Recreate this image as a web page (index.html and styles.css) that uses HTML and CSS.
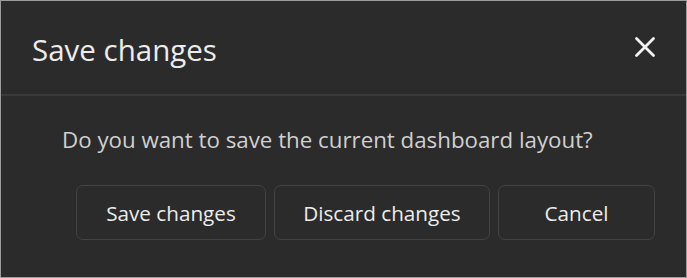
FILE: index.html
```html
<!DOCTYPE html>
<html>
<head>
<meta charset="utf-8">
<link rel="stylesheet" href="styles.css">
</head>
<body>
<div class="dialog">
  <div class="header">
    <h1 class="title">Save changes</h1>
    <button class="close" aria-label="Close">
      <svg width="22" height="22" viewBox="0 0 22 22"><path d="M2.5 2.5 L19.5 19.5 M19.5 2.5 L2.5 19.5" stroke="#f2f2f2" stroke-width="2.8" stroke-linecap="round"/></svg>
    </button>
  </div>
  <div class="content">
    <p class="message">Do you want to save the current dashboard layout?</p>
    <div class="actions">
      <button class="btn btn-save">Save changes</button>
      <button class="btn btn-discard">Discard changes</button>
      <button class="btn btn-cancel">Cancel</button>
    </div>
  </div>
</div>
</body>
</html>
```
FILE: styles.css
```css
html, body {
  margin: 0;
  padding: 0;
  background: #2b2b2b;
}
.dialog {
  width: 687px;
  height: 278px;
  box-sizing: border-box;
  border: 1px solid #9c9c9c;
  background: #2b2b2b;
  font-family: "Open Sans", "Noto Sans", sans-serif;
  color: #e6e6e6;
  display: flex;
  flex-direction: column;
}
.header {
  height: 95px;
  box-sizing: border-box;
  border-bottom: 2px solid #3a3a3a;
  padding: 4px 30px 0 31px;
  display: flex;
  align-items: center;
  justify-content: space-between;
}
.title {
  margin: 0;
  font-weight: 400;
  font-size: 29.5px;
  line-height: 38px;
  color: #ececec;
}
.close {
  background: none;
  border: none;
  padding: 0;
  width: 22px;
  height: 22px;
  display: flex;
  margin-top: -6px;
}
.content {
  padding: 29px 31px 0 61px;
  display: flex;
  flex-direction: column;
}
.message {
  margin: 0;
  font-size: 22.3px;
  line-height: 30px;
  color: #d0d0d0;
}
.actions {
  margin-top: 30px;
  display: flex;
  justify-content: flex-end;
  gap: 8px;
}
.btn {
  height: 55px;
  box-sizing: border-box;
  background: #2b2b2b;
  border: 1.5px solid #434343;
  border-radius: 7px;
  color: #ececec;
  font-family: "Open Sans", "Noto Sans", sans-serif;
  font-size: 20.7px;
  padding: 0;
}
.btn-save { width: 190px; }
.btn-discard { width: 216px; }
.btn-cancel { width: 157px; }
```
